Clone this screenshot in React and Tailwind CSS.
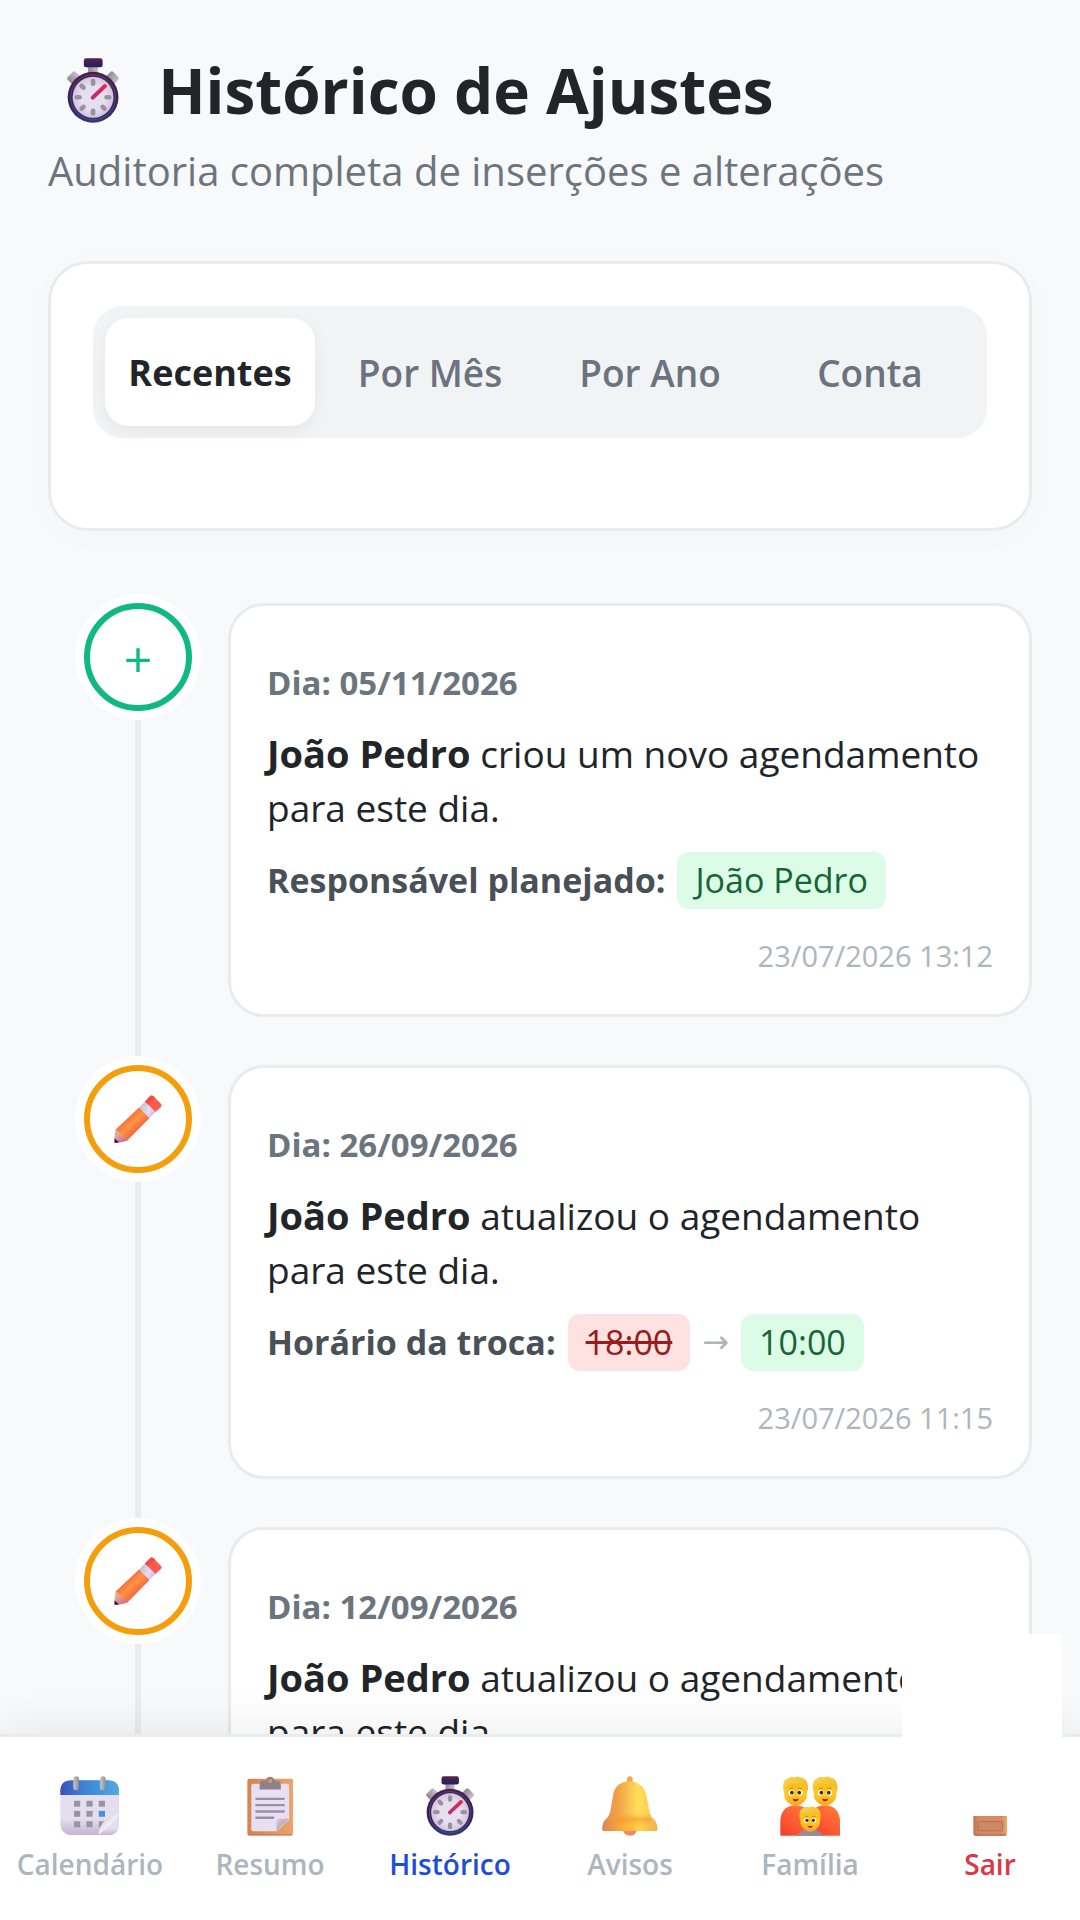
import { useState } from "react";

function StopwatchIcon({ id, className }) {
  return (
    <svg viewBox="111 83 158 197" className={className} aria-hidden="true">
      <defs>
        <linearGradient id={id + "rim"} x1="0" y1="0" x2="0" y2="1">
          <stop offset="0" stopColor="#4a1f4e" />
          <stop offset="0.6" stopColor="#33245a" />
          <stop offset="1" stopColor="#2f3b78" />
        </linearGradient>
        <linearGradient id={id + "cap"} x1="0" y1="0" x2="0" y2="1">
          <stop offset="0" stopColor="#532549" />
          <stop offset="1" stopColor="#251d5c" />
        </linearGradient>
        <linearGradient id={id + "ear"} x1="0" y1="0" x2="1" y2="0">
          <stop offset="0" stopColor="#8d8a91" />
          <stop offset="1" stopColor="#c4c2c8" />
        </linearGradient>
        <linearGradient id={id + "hand"} gradientUnits="userSpaceOnUse" x1="188" y1="205" x2="228" y2="166">
          <stop offset="0" stopColor="#bb2a86" />
          <stop offset="1" stopColor="#ea2543" />
        </linearGradient>
        <radialGradient id={id + "face"}>
          <stop offset="0.6" stopColor="#e6dff0" />
          <stop offset="1" stopColor="#d3c3dd" />
        </radialGradient>
      </defs>
      <rect x="116" y="128" width="34" height="34" rx="7" transform="rotate(-45 133 145)" fill={"url(#" + id + "ear)"} />
      <rect x="230" y="128" width="34" height="34" rx="7" transform="rotate(45 247 145)" fill={"url(#" + id + "ear)"} />
      <rect x="175" y="106" width="30" height="28" fill={"url(#" + id + "ear)"} />
      <rect x="162" y="84" width="57" height="27" rx="7" fill={"url(#" + id + "cap)"} />
      <circle cx="190" cy="202" r="77" fill={"url(#" + id + "rim)"} />
      <circle cx="190" cy="202" r="68" fill="none" stroke="#5c4378" strokeWidth="3" />
      <circle cx="190" cy="202" r="62" fill={"url(#" + id + "face)"} />
      {[0, 90, 135, 180, 225, 270, 315].map((a) => (
        <rect key={a} x="183" y="146" width="14" height="22" rx="7" fill="#98929f" transform={"rotate(" + a + " 190 202)"} />
      ))}
      <path d="M189 203 226 168" stroke={"url(#" + id + "hand)"} strokeWidth="12" strokeLinecap="round" />
    </svg>
  );
}

function PencilIcon({ className }) {
  return (
    <svg viewBox="161 167 146 146" className={className} aria-hidden="true">
      <defs>
        <linearGradient id="pencilBody" gradientUnits="userSpaceOnUse" x1="202" y1="238" x2="234" y2="272">
          <stop offset="0" stopColor="#f9703f" />
          <stop offset="0.45" stopColor="#ff9443" />
          <stop offset="1" stopColor="#f26a45" />
        </linearGradient>
        <linearGradient id="pencilBand" gradientUnits="userSpaceOnUse" x1="240" y1="200" x2="284" y2="222">
          <stop offset="0" stopColor="#c3bccb" />
          <stop offset="0.6" stopColor="#e6dcf5" />
          <stop offset="1" stopColor="#cfbde6" />
        </linearGradient>
        <linearGradient id="pencilWood" x1="0" y1="0" x2="1" y2="1">
          <stop offset="0.3" stopColor="#dcae92" />
          <stop offset="0.8" stopColor="#c9719f" />
        </linearGradient>
      </defs>
      <path d="M166 272 202 306 176 312 163 311 162 298Z" fill="url(#pencilWood)" />
      <path d="M163 299 175 309 173 312 162 312Z" fill="#42153f" />
      <path d="M166 272 238 204 269 237 201 306Z" fill="url(#pencilBody)" />
      <path d="M238 204 255 187 287 219 269 237Z" fill="url(#pencilBand)" />
      <path d="M255 187 269 172Q275 166 281 171L302 192Q309 198 303 204L287 219Z" fill="#ff5a4f" />
      <path d="M255 187 269 172Q275 166 281 171L286 176 264 196Z" fill="#ee4f42" />
    </svg>
  );
}

function CalendarIcon({ className }) {
  return (
    <svg viewBox="179 194 182 184" className={className} aria-hidden="true">
      <defs>
        <linearGradient id="calTop" x1="0" y1="0" x2="1" y2="0">
          <stop offset="0" stopColor="#3b50b8" />
          <stop offset="0.4" stopColor="#3f83d3" />
          <stop offset="1" stopColor="#4fa9e2" />
        </linearGradient>
        <linearGradient id="calBody" x1="0" y1="0" x2="0" y2="1">
          <stop offset="0.7" stopColor="#e4deee" />
          <stop offset="1" stopColor="#c4b3d2" />
        </linearGradient>
        <linearGradient id="calRing" x1="0" y1="0" x2="1" y2="0">
          <stop offset="0" stopColor="#c9c9cc" />
          <stop offset="1" stopColor="#8c8c94" />
        </linearGradient>
        <linearGradient id="calFold" x1="0" y1="0" x2="1" y2="1">
          <stop offset="0.2" stopColor="#d8cfdf" />
          <stop offset="0.5" stopColor="#f3eef6" />
          <stop offset="1" stopColor="#d9cce4" />
        </linearGradient>
      </defs>
      <rect x="180" y="207" width="180" height="168" rx="34" fill="url(#calBody)" />
      <path d="M180 252V241Q180 207 214 207H326Q360 207 360 241V252Z" fill="url(#calTop)" />
      {[270, 301, 333].map((y) =>
        [222, 260, 298].map((x) => (
          <rect key={x + "-" + y} x={x} y={y} width="19" height="18" fill={x === 298 && y === 301 ? "#4a90dd" : "#9894a0"} />
        ))
      )}
      <path d="M297 375Q302 345 320 329 338 313 360 312V341Q360 375 326 375Z" fill="url(#calBody)" />
      <path d="M297 374Q300 344 320 328 336 314 359 312 352 327 337 341 319 356 297 374Z" fill="url(#calFold)" />
      <rect x="220" y="195" width="17" height="43" rx="8.5" fill="url(#calRing)" />
      <rect x="302" y="195" width="17" height="43" rx="8.5" fill="url(#calRing)" />
    </svg>
  );
}

function ClipboardIcon({ className }) {
  return (
    <svg viewBox="740 196 140 181" className={className} aria-hidden="true">
      <defs>
        <linearGradient id="clipBoard" x1="0" y1="0" x2="1" y2="0">
          <stop offset="0" stopColor="#d98250" />
          <stop offset="0.5" stopColor="#e09159" />
          <stop offset="1" stopColor="#eba56b" />
        </linearGradient>
        <linearGradient id="clipFold" x1="0" y1="0" x2="1" y2="1">
          <stop offset="0" stopColor="#d8cde0" />
          <stop offset="0.5" stopColor="#b9acc3" />
        </linearGradient>
      </defs>
      <rect x="741" y="204" width="138" height="171" rx="6" fill="url(#clipBoard)" />
      <path d="M744 374H876" stroke="#c56a50" strokeWidth="3" />
      <path d="M759 219H861Q867 219 867 225V327L831 363H759Q753 363 753 357V225Q753 219 759 219Z" fill="#e8dff2" />
      <path d="M829 363V331Q829 325 835 325H867Z" fill="url(#clipFold)" />
      <path d="M768 265H851M768 284H851M768 303H851M768 322H819" stroke="#9a90a5" strokeWidth="7" strokeLinecap="round" />
      <path d="M778 237V223Q778 211 790 210H797Q799 198 810 198T823 210H830Q842 211 842 223V237Z" fill="#8d818f" />
      <circle cx="810" cy="211" r="6" fill="#e4935a" />
    </svg>
  );
}

function BellIcon({ className }) {
  return (
    <svg viewBox="755 196 169 182" className={className} aria-hidden="true">
      <defs>
        <linearGradient id="bellBody" x1="0" y1="0" x2="1" y2="0">
          <stop offset="0" stopColor="#e28a55" />
          <stop offset="0.3" stopColor="#f3a346" />
          <stop offset="0.65" stopColor="#ffdf5a" />
          <stop offset="1" stopColor="#f9c04a" />
        </linearGradient>
        <linearGradient id="bellRim" x1="0" y1="0" x2="1" y2="0">
          <stop offset="0" stopColor="#d9855a" />
          <stop offset="0.35" stopColor="#f9ab33" />
          <stop offset="0.7" stopColor="#ffd149" />
          <stop offset="1" stopColor="#f0ae4c" />
        </linearGradient>
        <linearGradient id="bellShade" x1="0" y1="0" x2="0" y2="1">
          <stop offset="0" stopColor="#f59a31" stopOpacity="0" />
          <stop offset="0.5" stopColor="#f59a31" stopOpacity="0.55" />
          <stop offset="1" stopColor="#f59a31" stopOpacity="0" />
        </linearGradient>
      </defs>
      <path d="M818 360Q822 377 840 377T861 360Z" fill="#ee8961" />
      <rect x="831" y="197" width="17" height="26" rx="8" fill="#f4a945" />
      <path d="M839 212C811 212 792 228 788 258L781 300Q778 319 763 331 756 339 756 357 756 363 762 363H917Q923 363 923 357 923 339 913 329 901 317 898 299L890 256C884 228 865 212 839 212Z" fill="url(#bellBody)" />
      <path d="M770 324H909Q923 338 923 357 923 363 917 363H762Q756 363 756 357 756 339 770 324Z" fill="url(#bellRim)" />
      <rect x="776" y="308" width="127" height="38" fill="url(#bellShade)" />
    </svg>
  );
}

function Head({ x, y, s }) {
  return (
    <g transform={"translate(" + x + " " + y + ") scale(" + s + ")"}>
      <path d="M-36 24Q-40 6-33-14-20-34 0-34 22-34 34-14 40 6 36 24 33 38 20 46 9 54 0 54-9 54-20 46-33 38-36 24Z" fill="url(#famSkin)" />
      <path d="M-38 8Q-42-8-39-20-37-32-25-35-15-44-5-38 6-44 16-38 34-36 38-20 43-6 38 8 35 0 32-13 20-14 13-21 0-13-12-21-20-13-31-13-35-2-38 8Z" fill="url(#famHair)" />
      <path d="M-20-2Q-13-6-7-3M7-3Q13-6 20-2" fill="none" stroke="#d07a22" strokeWidth="3" />
      <circle cx="-14" cy="11" r="9" fill="#fff" />
      <circle cx="14" cy="11" r="9" fill="#fff" />
      <circle cx="-12" cy="11" r="6" fill="#392c31" />
      <circle cx="12" cy="11" r="6" fill="#392c31" />
      <path d="M-10 30Q0 34 11 30 7 39 0 39-7 39-10 30Z" fill="#aa123d" />
    </g>
  );
}

function FamilyIcon({ className }) {
  return (
    <svg viewBox="239 196 182 181" className={className} aria-hidden="true">
      <defs>
        <linearGradient id="famSkin" x1="0" y1="0" x2="0" y2="1">
          <stop offset="0" stopColor="#f7b91d" />
          <stop offset="0.6" stopColor="#ffc91f" />
          <stop offset="1" stopColor="#f5a51e" />
        </linearGradient>
        <linearGradient id="famHair" x1="0" y1="0" x2="1" y2="1">
          <stop offset="0" stopColor="#fad94c" />
          <stop offset="1" stopColor="#efb22c" />
        </linearGradient>
        <linearGradient id="famShirt" x1="0" y1="1" x2="0.8" y2="0">
          <stop offset="0" stopColor="#e8432f" />
          <stop offset="0.5" stopColor="#ff5a33" />
          <stop offset="1" stopColor="#ff7a38" />
        </linearGradient>
      </defs>
      <path d="M240 376V328Q244 290 278 285H296Q322 290 330 314V376Z" fill="url(#famShirt)" />
      <path d="M330 376V314Q338 290 364 285H382Q416 290 420 328V376Z" fill="url(#famShirt)" />
      <Head x={286} y={236} s={0.93} />
      <Head x={375} y={236} s={0.93} />
      <path d="M292 376Q304 355 330 355T368 376Z" fill="#958b9d" />
      <Head x={330} y={321} s={0.8} />
    </svg>
  );
}

function DoorIcon({ className }) {
  return (
    <svg viewBox="818 196 104 182" className={className} aria-hidden="true">
      <defs>
        <linearGradient id="doorBody" x1="0" y1="0" x2="1" y2="0">
          <stop offset="0" stopColor="#bd7450" />
          <stop offset="0.15" stopColor="#d68a60" />
          <stop offset="0.85" stopColor="#d98d5e" />
          <stop offset="1" stopColor="#eaa76b" />
        </linearGradient>
      </defs>
      <rect x="819" y="197" width="102" height="180" rx="8" fill="url(#doorBody)" />
      <path d="M824 375H916" stroke="#c76b5c" strokeWidth="4" strokeLinecap="round" />
      <rect x="833" y="212" width="75" height="104" rx="5" fill="#c58362" stroke="#b8704f" strokeWidth="3" />
      <rect x="833" y="334" width="75" height="28" rx="5" fill="#cb8864" stroke="#b8704f" strokeWidth="3" />
    </svg>
  );
}

const tabs = ["Recentes", "Por Mês", "Por Ano", "Conta"];

const entries = [
  {
    kind: "create",
    day: "05/11/2026",
    author: "João Pedro",
    action: "criou um novo agendamento para este dia.",
    field: "Responsável planejado:",
    to: "João Pedro",
    at: "23/07/2026 13:12",
  },
  {
    kind: "update",
    day: "26/09/2026",
    author: "João Pedro",
    action: "atualizou o agendamento para este dia.",
    field: "Horário da troca:",
    from: "18:00",
    to: "10:00",
    at: "23/07/2026 11:15",
  },
  {
    kind: "update",
    day: "12/09/2026",
    author: "João Pedro",
    action: "atualizou o agendamento para este dia.",
    field: "Horário da troca:",
    from: "18:00",
    to: "10:00",
    at: "23/07/2026 11:14",
  },
];

const navItems = [
  { label: "Calendário", icon: <CalendarIcon className="h-[60px]" />, color: "text-[#adb5bd]" },
  { label: "Resumo", icon: <ClipboardIcon className="h-[60px]" />, color: "text-[#adb5bd]" },
  { label: "Histórico", icon: <StopwatchIcon id="nav" className="h-[60px]" />, color: "text-[#1d4ed8]", current: true },
  { label: "Avisos", icon: <BellIcon className="h-[60px]" />, color: "text-[#adb5bd]" },
  { label: "Família", icon: <FamilyIcon className="h-[60px]" />, color: "text-[#adb5bd]" },
  { label: "Sair", icon: <DoorIcon className="h-[60px]" />, color: "text-[#dc3545]" },
];

function Entry({ entry }) {
  const created = entry.kind === "create";
  return (
    <li className="flex items-start gap-9">
      <div
        className={
          "z-10 flex size-[108px] shrink-0 items-center justify-center rounded-full border-6 bg-white ring-9 ring-white " +
          (created ? "border-[#10b981]" : "border-[#f59e0b]")
        }
      >
        {created ? (
          <span className="pt-1 text-[50px] leading-none text-[#10b981]">+</span>
        ) : (
          <PencilIcon className="size-12" />
        )}
      </div>
      <article className="min-w-0 flex-1 rounded-[36px] border-3 border-[#e9ecef] bg-white px-9 pt-[54px] pb-9">
        <h2 className="text-[33px] leading-[46px] font-bold text-[#6c757d]">Dia: {entry.day}</h2>
        <p className="mt-5 text-[37px] leading-[54px]">
          <strong className="text-[38px] font-bold">{entry.author}</strong> {entry.action}
        </p>
        <p className="mt-[17px] flex items-center gap-3 text-[34px] leading-[57px]">
          <strong className="font-bold text-[#495057]">{entry.field}</strong>
          {entry.from && (
            <>
              <del className="rounded-xl bg-[#fee2e2] px-[18px] text-[#991b1b]">{entry.from}</del>
              <span className="font-['DejaVu_Sans',sans-serif] text-[32px] text-[#adb5bd]">→</span>
            </>
          )}
          <span className="rounded-xl bg-[#dcfce7] px-[18px] text-[#166534]">{entry.to}</span>
        </p>
        <time className="mt-6 block text-right text-[29px] leading-[45px] text-[#adb5bd]">{entry.at}</time>
      </article>
    </li>
  );
}

export default function App() {
  const [active, setActive] = useState("Recentes");
  return (
    <div className="relative flex h-screen flex-col overflow-hidden bg-[#f8f9fb] font-['Open_Sans','Noto_Sans',sans-serif] text-[#212529]">
      <main className="min-h-0 flex-1 overflow-y-auto px-12 pt-12 [scrollbar-width:none]">
        <header>
          <h1 className="flex items-center text-[62px] leading-[84px] font-bold">
            <StopwatchIcon id="title" className="mr-[39px] ml-[19px] h-[65px]" />
            Histórico de Ajustes
          </h1>
          <p className="mt-[7px] text-[40px] leading-[63px] text-[#6c757d]">
            Auditoria completa de inserções e alterações
          </p>
        </header>

        <section className="mt-[59px] rounded-[40px] border-3 border-[#e9ecef] bg-white px-[42px] pt-[42px] pb-[90px] shadow-[0_6px_36px_rgba(0,0,0,0.02)]">
          <div role="tablist" className="grid grid-cols-4 gap-2.5 rounded-[30px] bg-[#f1f3f5] p-3">
            {tabs.map((tab) => (
              <button
                key={tab}
                type="button"
                role="tab"
                aria-selected={active === tab}
                onClick={() => setActive(tab)}
                className={
                  "h-[108px] rounded-3xl pt-0.5 " +
                  (active === tab
                    ? "bg-white text-[36px] font-bold text-[#212529] shadow-[0_6px_18px_rgba(0,0,0,0.05)]"
                    : "text-[37px] font-semibold text-[#6b7280]")
                }
              >
                {tab}
              </button>
            ))}
          </div>
        </section>

        <div className="relative mt-[72px]">
          <div className="absolute inset-y-0 left-[87px] w-1.5 bg-[#e9ecef]" />
          <ol className="flex flex-col gap-12 pb-12 pl-9">
            {entries.map((entry) => (
              <Entry key={entry.day} entry={entry} />
            ))}
          </ol>
        </div>
      </main>

      <nav className="relative z-20 grid grid-cols-6 border-t-3 border-[#e9ecef] bg-white pt-[39px] pb-[31px] shadow-[0_-12px_36px_rgba(0,0,0,0.06)]">
        {navItems.map((item) => (
          <a
            key={item.label}
            href="#"
            aria-current={item.current ? "page" : undefined}
            className={"flex flex-col items-center gap-1 text-[28px] leading-[49px] font-semibold " + item.color}
          >
            {item.icon}
            {item.label}
          </a>
        ))}
      </nav>

      <div className="absolute right-[18px] bottom-[104px] z-30 h-[182px] w-40 bg-white" />
    </div>
  );
}
